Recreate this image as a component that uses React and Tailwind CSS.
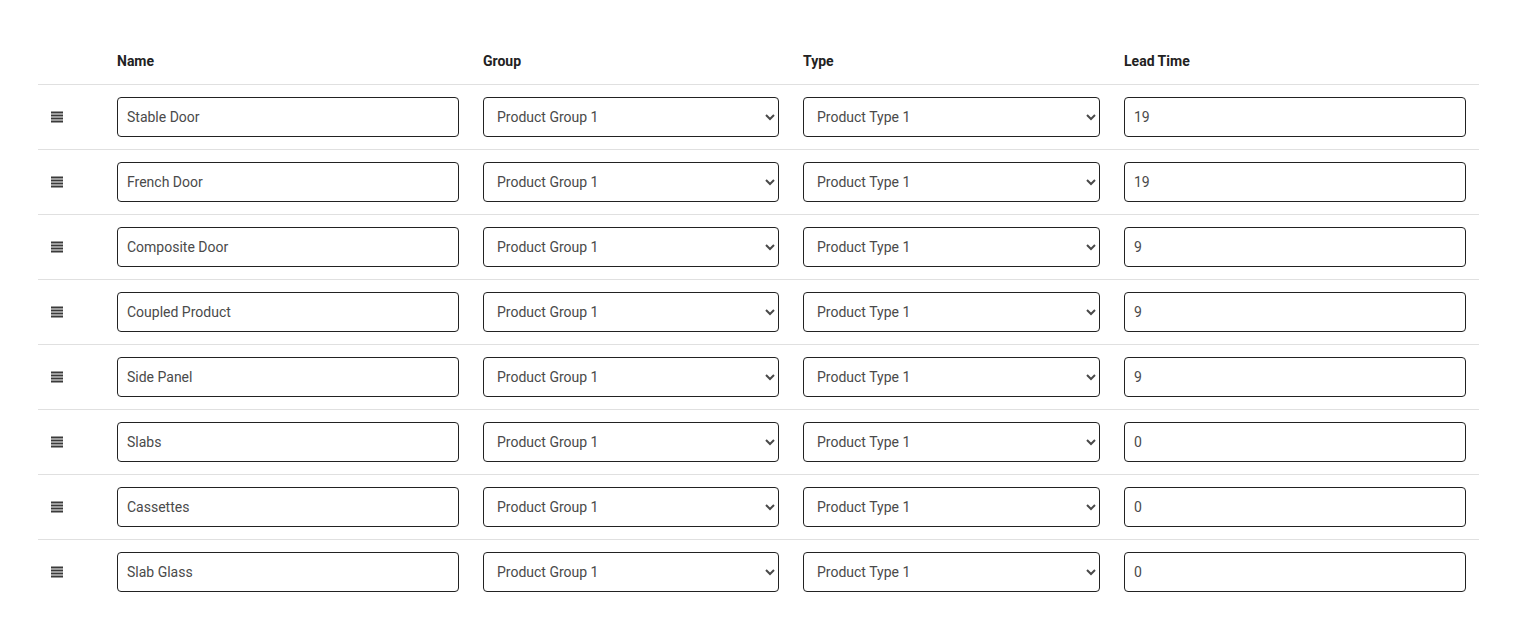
import React from 'react';

const ROWS = [
  { name: 'Stable Door', lead: '19' },
  { name: 'French Door', lead: '19' },
  { name: 'Composite Door', lead: '9' },
  { name: 'Coupled Product', lead: '9' },
  { name: 'Side Panel', lead: '9' },
  { name: 'Slabs', lead: '0' },
  { name: 'Cassettes', lead: '0' },
  { name: 'Slab Glass', lead: '0' },
];

const GRID = 'grid grid-cols-[67px_366px_320px_321px_367px]';

function Handle() {
  return (
    <svg width="12" height="12" viewBox="0 0 12 12" className="text-[#3a3a3a]">
      <rect x="0" y="0.5" width="12" height="2" fill="currentColor" />
      <rect x="0" y="3.5" width="12" height="2" fill="currentColor" />
      <rect x="0" y="6.5" width="12" height="2" fill="currentColor" />
      <rect x="0" y="9.5" width="12" height="2" fill="currentColor" />
    </svg>
  );
}

export default function App() {
  const field = 'w-full h-10 border border-[#222] rounded-[4px] bg-white text-[14px] text-[#4a4a4a] outline-none';

  return (
    <div className="min-h-screen bg-white pt-[38px] px-[38px] font-['Roboto',sans-serif]">
      <div className="w-[1441px]">
        {/* header */}
        <div className={`${GRID} h-[47px] items-center pt-[1px] border-b border-[#e0e0e0] text-[14px] font-bold text-[#222]`}>
          <div />
          <div className="px-3">Name</div>
          <div className="px-3">Group</div>
          <div className="px-3">Type</div>
          <div className="px-3">Lead Time</div>
        </div>

        {ROWS.map((row, i) => (
          <div key={row.name} className={`${GRID} items-center ${i > 0 ? 'border-t border-[#e0e0e0]' : ''}`}>
            <div className="pl-[13px] flex items-center">
              <Handle />
            </div>
            <div className="p-3">
              <input className={`${field} px-[9px]`} defaultValue={row.name} />
            </div>
            <div className="p-3">
              <select className={`${field} pl-[9px] pr-2`} defaultValue="1">
                <option value="1">Product Group 1</option>
              </select>
            </div>
            <div className="p-3">
              <select className={`${field} pl-[9px] pr-2`} defaultValue="1">
                <option value="1">Product Type 1</option>
              </select>
            </div>
            <div className="py-3 pl-3 pr-[13px]">
              <input className={`${field} px-[9px]`} defaultValue={row.lead} />
            </div>
          </div>
        ))}
      </div>
    </div>
  );
}
